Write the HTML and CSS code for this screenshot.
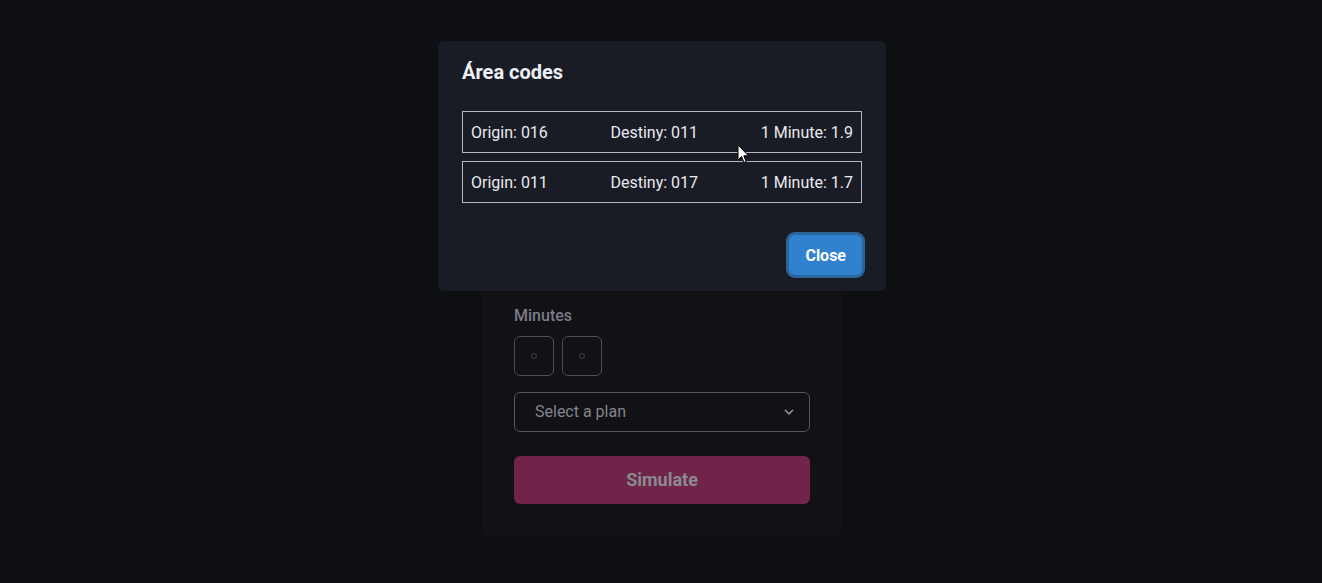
FILE: index.html
```html
<!DOCTYPE html>
<html lang="en">
<head>
<meta charset="utf-8">
<title>Área codes</title>
<link rel="stylesheet" href="styles.css">
</head>
<body>
<main class="page">
  <section class="card">
    <div class="field">
      <label class="label">Minutes</label>
      <div class="pins">
        <div class="pin"><span class="dot"></span></div>
        <div class="pin"><span class="dot"></span></div>
      </div>
    </div>
    <div class="select plan">
      <span>Select a plan</span>
      <svg class="chev" width="16" height="16" viewBox="0 0 24 24"><path d="M6.5 9.5l5.5 5.5 5.5-5.5" fill="none" stroke="#9a9ba2" stroke-width="2.2" stroke-linecap="round" stroke-linejoin="round"/></svg>
    </div>
    <button class="simulate">Simulate</button>
  </section>
</main>

<div class="modal-layer">
  <div class="modal">
    <header class="modal-header">Área codes</header>
    <div class="modal-body">
      <div class="code-row"><span>Origin: 016</span><span>Destiny: 011</span><span>1 Minute: 1.9</span></div>
      <div class="code-row"><span>Origin: 011</span><span>Destiny: 017</span><span>1 Minute: 1.7</span></div>
    </div>
    <footer class="modal-footer">
      <button class="close">Close</button>
    </footer>
  </div>
</div>

<svg class="cursor" width="13" height="20" viewBox="0 0 13 20"><path d="M1 1 L1 16 L4.5 12.5 L7 18.5 L9.2 17.6 L6.8 11.8 L11.5 11.8 Z" fill="#ffffff" stroke="#000" stroke-width="1"/></svg>
</body>
</html>
```

FILE: styles.css
```css
* { box-sizing: border-box; }
html, body { margin: 0; padding: 0; }
body {
  background: #0e0f13;
  font-family: Roboto, "Noto Sans", "Liberation Sans", sans-serif;
  color: #e4e6ec;
  width: 1322px;
  height: 583px;
  overflow: hidden;
  position: relative;
}
.page {
  display: flex;
  justify-content: center;
  padding-top: 240px;
  padding-left: 2px;
}
.card {
  width: 360px;
  background: #111116;
  border-radius: 8px;
  padding: 64px 32px 33px;
  display: flex;
  flex-direction: column;
}
.field { display: flex; flex-direction: column; margin-bottom: 16px; }
.label {
  font-size: 16px;
  line-height: 24px;
  font-weight: 500;
  color: #7b7c85;
  margin-bottom: 8px;
}
.pins { display: flex; gap: 8px; }
.pin {
  width: 40px; height: 40px;
  border: 1px solid #4d4e55;
  border-radius: 6px;
  display: flex; align-items: center; justify-content: center;
}
.dot {
  width: 6px; height: 6px;
  border: 1px solid #45394f;
  border-radius: 50%;
}
.select {
  height: 40px;
  border: 1px solid #55565d;
  border-radius: 6px;
  display: flex;
  align-items: center;
  justify-content: space-between;
  padding: 0 12px 1px 20px;
  font-size: 16px;
  color: #84858c;
}
.plan { margin-bottom: 24px; }
.chev { display: block; }
.simulate {
  height: 48px;
  border: none;
  border-radius: 6px;
  background: #70244a;
  color: #8a8a8e;
  font-family: inherit;
  font-size: 18px;
  font-weight: 700;
  padding-bottom: 2px;
}
.modal-layer {
  position: absolute;
  inset: 0;
  display: flex;
  justify-content: center;
  align-items: flex-start;
  padding-top: 41px;
  padding-left: 2px;
}
.modal {
  width: 448px;
  background: #1a1c25;
  border-radius: 6px;
  display: flex;
  flex-direction: column;
}
.modal-header {
  padding: 16px 24px;
  font-size: 20px;
  line-height: 30px;
  font-weight: 700;
  color: #eef0f4;
}
.modal-body {
  padding: 8px 24px;
  display: flex;
  flex-direction: column;
  gap: 8px;
}
.code-row {
  height: 42px;
  border: 1px solid #b4b7c0;
  padding: 0 8px;
  display: flex;
  align-items: center;
  justify-content: space-between;
  font-size: 16px;
  color: #e8eaef;
}
.code-row:last-child { margin-bottom: 8px; }
.modal-footer {
  padding: 16px 24px;
  display: flex;
  justify-content: flex-end;
}
.close {
  height: 40px;
  padding: 0 16px;
  border: none;
  border-radius: 6px;
  background: #3182ce;
  color: #ffffff;
  font-family: inherit;
  font-size: 16px;
  font-weight: 700;
  box-shadow: 0 0 0 3px #2c659b;
}
.cursor {
  position: absolute;
  left: 737px;
  top: 144px;
}
```
